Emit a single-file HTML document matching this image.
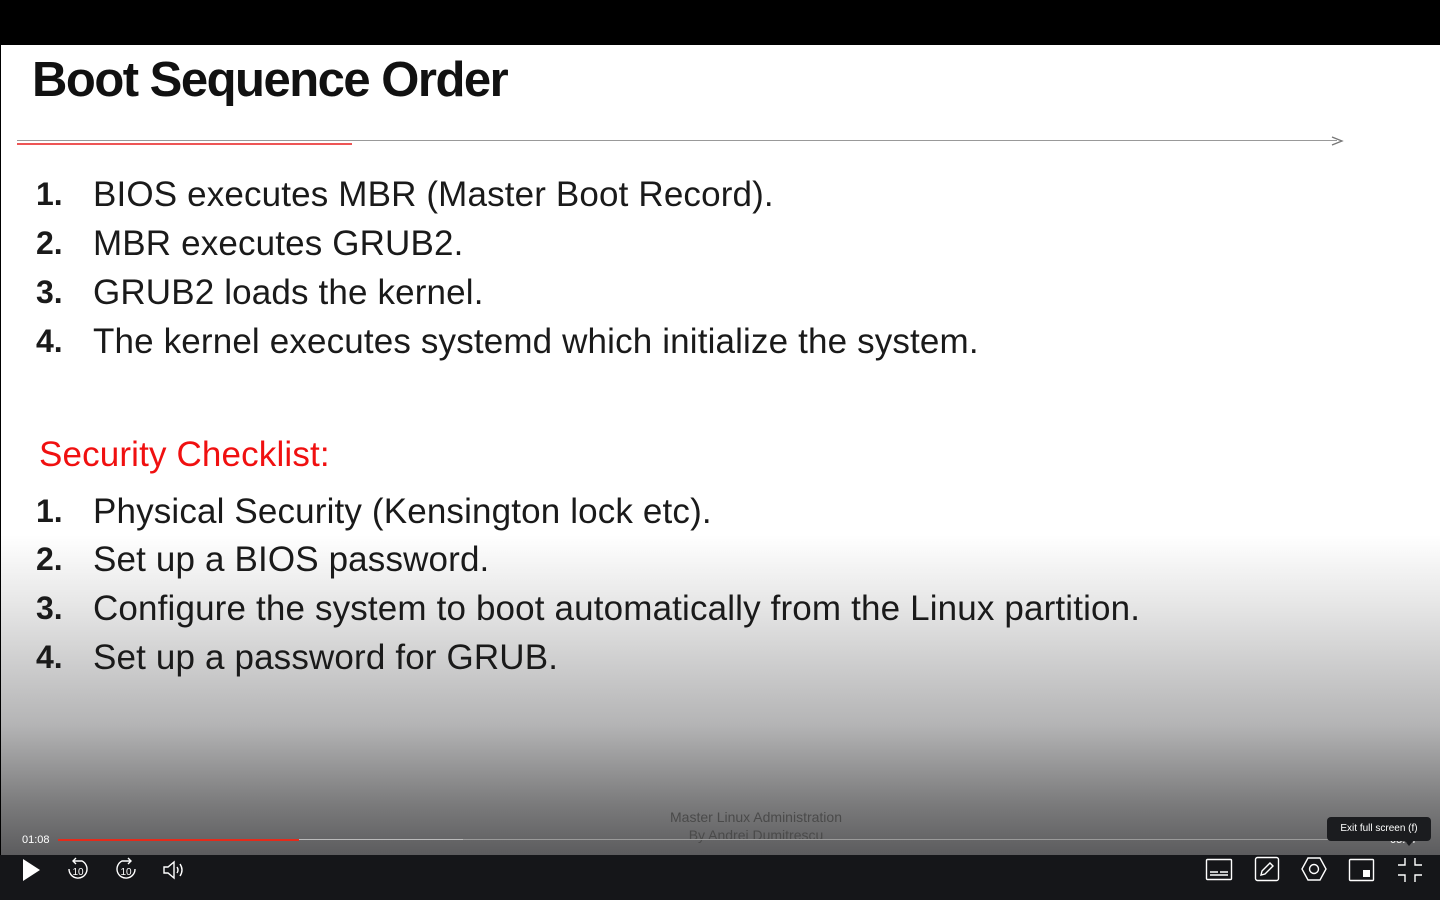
<!DOCTYPE html>
<html><head><style>
body{margin:0;width:1440px;height:900px;background:#000;overflow:hidden;font-family:"Liberation Sans",sans-serif;position:relative}
.slide{position:absolute;left:1px;top:45px;width:1439px;height:810px;background:linear-gradient(#fff 0,#fff 490px,#e6e6e6 560px,#b4b4b5 680px,#7a7a7b 760px,#5c5c5e 810px)}
.t{position:absolute;white-space:nowrap}
.h{left:32px;top:52px;font-size:49px;font-weight:bold;letter-spacing:-1.5px;color:#111}
.li{font-size:35px;letter-spacing:0.15px;color:#1a1a1a}
.n{position:absolute;left:36px;font-weight:bold;font-size:32px;color:#1a1a1a}
.bar{position:absolute;left:0;top:855px;width:1440px;height:45px;background:#151619}
svg{position:absolute}
</style></head><body>
<div class="slide"></div>
<div class="t h">Boot Sequence Order</div>
<div style="position:absolute;left:17px;top:140px;width:1320px;height:1px;background:#999"></div>
<div style="position:absolute;left:17px;top:143px;width:335px;height:2px;background:#e55"></div>
<svg style="left:1330px;top:135px" width="14" height="12"><path d="M2 2 L12 6 L2 10" fill="none" stroke="#777" stroke-width="1.3"/></svg>

<div class="n" style="top:176px">1.</div><div class="t li" style="left:93px;top:175px">BIOS executes MBR (Master Boot Record).</div>
<div class="n" style="top:225px">2.</div><div class="t li" style="left:93px;top:224px">MBR executes GRUB2.</div>
<div class="n" style="top:274px">3.</div><div class="t li" style="left:93px;top:273px">GRUB2 loads the kernel.</div>
<div class="n" style="top:323px">4.</div><div class="t li" style="left:93px;top:322px">The kernel executes systemd which initialize the system.</div>

<div class="t li" style="left:39px;top:435px;color:#f01010">Security Checklist:</div>
<div class="n" style="top:493px">1.</div><div class="t li" style="left:93px;top:492px">Physical Security (Kensington lock etc).</div>
<div class="n" style="top:541px">2.</div><div class="t li" style="left:93px;top:540px">Set up a BIOS password.</div>
<div class="n" style="top:590px">3.</div><div class="t li" style="left:93px;top:589px">Configure the system to boot automatically from the Linux partition.</div>
<div class="n" style="top:639px">4.</div><div class="t li" style="left:93px;top:638px">Set up a password for GRUB.</div>

<div class="t" style="left:656px;top:808px;width:200px;text-align:center;font-size:14px;color:#4a4a4a;line-height:18px">Master Linux Administration<br>By Andrei Dumitrescu</div>

<div class="t" style="left:22px;top:834px;font-size:11px;color:#fff">01:08</div>
<div style="position:absolute;left:58px;top:839px;width:1337px;height:1px;background:#9a9a9a"></div>
<div style="position:absolute;left:58px;top:839px;width:405px;height:1px;background:#bbb"></div>
<div style="position:absolute;left:58px;top:839px;width:241px;height:2px;background:#e52a1a"></div>
<div class="t" style="left:1390px;top:834px;font-size:11px;color:#fff">05:17</div>
<div style="position:absolute;left:1327px;top:817px;width:104px;height:24px;background:#1b1c1f;border-radius:4px;color:#fff;font-size:10px;line-height:24px;text-align:center">Exit full screen (f)</div>
<div style="position:absolute;left:1404px;top:840px;width:0;height:0;border-left:5px solid transparent;border-right:5px solid transparent;border-top:6px solid #1b1c1f"></div>

<div class="bar"></div>
<svg style="left:20px;top:857px" width="22" height="26"><path d="M3 2 L20 13 L3 24Z" fill="#fff"/></svg>
<svg style="left:64px;top:856px" width="28" height="28" fill="none" stroke="#fff" stroke-width="1.4"><path d="M10 5 H18 A9 9 0 1 1 5 13"/><path d="M12 2 L9 5 L12 8"/><text x="14" y="19" font-size="10" fill="#fff" stroke="none" text-anchor="middle" font-family="Liberation Sans">10</text></svg>
<svg style="left:112px;top:856px" width="28" height="28" fill="none" stroke="#fff" stroke-width="1.4"><path d="M18 5 H10 A9 9 0 1 0 23 13"/><path d="M16 2 L19 5 L16 8"/><text x="14" y="19" font-size="10" fill="#fff" stroke="none" text-anchor="middle" font-family="Liberation Sans">10</text></svg>
<svg style="left:162px;top:858px" width="24" height="24" fill="none" stroke="#fff" stroke-width="1.4"><path d="M2 9 H6 L12 4 V20 L6 15 H2Z"/><path d="M15 9 Q17 12 15 15"/><path d="M18 6 Q22 12 18 18"/></svg>
<svg style="left:1205px;top:857px" width="28" height="26" fill="none" stroke="#fff" stroke-width="1.4"><rect x="1.5" y="2.5" width="25" height="20" rx="1"/><path d="M5 15 H13 M15 15 H23 M5 18 H23"/></svg>
<svg style="left:1254px;top:856px" width="26" height="26" fill="none" stroke="#fff" stroke-width="1.4"><rect x="1.5" y="1.5" width="23" height="23" rx="2"/><path d="M7 19 L8 15 L16 7 L19 10 L11 18Z"/></svg>
<svg style="left:1300px;top:856px" width="28" height="26" fill="none" stroke="#fff" stroke-width="1.4"><path d="M8 2 H20 L26 13 L20 24 H8 L2 13Z"/><circle cx="14" cy="13" r="4.5"/></svg>
<svg style="left:1348px;top:857px" width="28" height="26" fill="none" stroke="#fff" stroke-width="1.4"><rect x="1.5" y="2.5" width="24" height="21" rx="1"/><rect x="15" y="13" width="7" height="7" fill="#fff" stroke="none"/></svg>
<svg style="left:1396px;top:856px" width="28" height="28" fill="none" stroke="#fff" stroke-width="1.4"><path d="M9 2 V9 H2 M19 2 V9 H26 M2 19 H9 V26 M26 19 H19 V26"/></svg>
</body></html>
